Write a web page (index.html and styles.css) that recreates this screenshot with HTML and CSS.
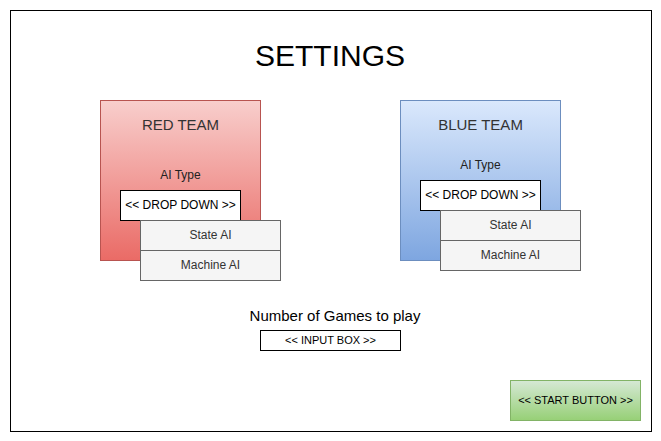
FILE: index.html
```html
<!DOCTYPE html>
<html lang="en">
<head>
  <meta charset="UTF-8">
  <meta name="viewport" content="width=device-width, initial-scale=1.0">
  <title>Settings</title>
  <link rel="stylesheet" href="styles.css">
</head>
<body>
  <div class="frame">
    <h1 class="title">SETTINGS</h1>

    <div class="teams">
      <div class="team team-red">
        <div class="team-name">RED TEAM</div>
        <div class="ai-label">AI Type</div>
        <div class="dropdown">
          &lt;&lt; DROP DOWN &gt;&gt;
          <div class="dropdown-list">
            <div class="dropdown-item">State AI</div>
            <div class="dropdown-item">Machine AI</div>
          </div>
        </div>
      </div>

      <div class="team team-blue">
        <div class="team-name">BLUE TEAM</div>
        <div class="ai-label">AI Type</div>
        <div class="dropdown">
          &lt;&lt; DROP DOWN &gt;&gt;
          <div class="dropdown-list">
            <div class="dropdown-item">State AI</div>
            <div class="dropdown-item">Machine AI</div>
          </div>
        </div>
      </div>
    </div>

    <div class="games">
      <div class="games-label">Number of Games to play</div>
      <div class="input-box">&lt;&lt; INPUT BOX &gt;&gt;</div>
    </div>

    <div class="actions">
      <div class="start-button">&lt;&lt; START BUTTON &gt;&gt;</div>
    </div>
  </div>
</body>
</html>
```

FILE: styles.css
```css
* {
  box-sizing: border-box;
}

body {
  margin: 0;
  background: #fff;
  font-family: "Liberation Sans", Arial, sans-serif;
  color: #000;
}

.frame {
  margin: 10px 0 0 10px;
  width: 642px;
  height: 422px;
  border: 1px solid #000;
  padding-top: 28px;
}

.title {
  margin: 0;
  font-size: 30px;
  font-weight: normal;
  line-height: 34px;
  text-align: center;
  padding-right: 2px;
}

.teams {
  display: flex;
  gap: 139px;
  margin-top: 27px;
  padding-left: 89px;
}

.team {
  width: 161px;
  height: 161px;
  border: 1px solid;
  padding-top: 15px;
}

.team-red {
  background: linear-gradient(to bottom, #f8cecc, #ea6b66);
  border-color: #b85450;
}

.team-blue {
  background: linear-gradient(to bottom, #dae8fc, #7ea6e0);
  border-color: #6c8ebf;
}

.team-name {
  font-size: 15px;
  line-height: 18px;
  text-align: center;
  color: #333;
}

.ai-label {
  margin-top: 34px;
  font-size: 12px;
  line-height: 14px;
  text-align: center;
  color: #222;
}

.team-blue .ai-label {
  margin-top: 24px;
}

.dropdown {
  position: relative;
  margin: 8px 0 0 19px;
  width: 121px;
  height: 31px;
  background: #fff;
  border: 1px solid #000;
  font-size: 12px;
  line-height: 29px;
  text-align: center;
}

.dropdown-list {
  position: absolute;
  top: 29px;
  left: 19px;
  width: 141px;
  background: #f5f5f5;
  border: 1px solid #666;
  color: #333;
}

.dropdown-item {
  height: 29px;
  line-height: 29px;
  text-align: center;
}

.dropdown-item + .dropdown-item {
  height: 30px;
  border-top: 1px solid #666;
}

.games {
  margin-top: 46px;
}

.games-label {
  font-size: 15px;
  line-height: 18px;
  text-align: center;
  padding-left: 8px;
}

.input-box {
  margin: 5px 0 0 249px;
  width: 141px;
  height: 21px;
  border: 1px solid #000;
  font-size: 11px;
  line-height: 19px;
  text-align: center;
}

.actions {
  display: flex;
  justify-content: flex-end;
  margin-top: 29px;
  padding-right: 10px;
}

.start-button {
  width: 131px;
  height: 41px;
  background: linear-gradient(to bottom, #d5e8d4, #97d077);
  border: 1px solid #82b366;
  font-size: 11px;
  line-height: 39px;
  text-align: center;
}
```
